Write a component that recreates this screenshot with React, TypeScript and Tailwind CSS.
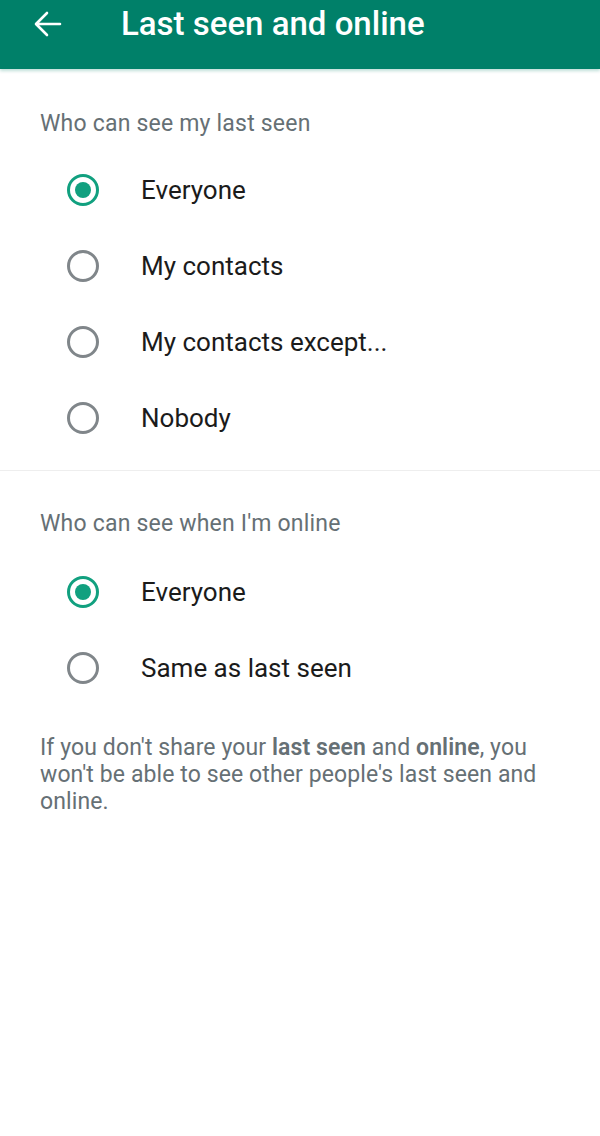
import type { FC } from 'react';

const FONT = { fontFamily: 'Roboto, "Noto Sans", sans-serif' };

const Radio: FC<{ checked?: boolean }> = ({ checked }) => (
  <span
    className={`flex h-[32px] w-[32px] shrink-0 items-center justify-center rounded-full border-[3px] ${
      checked ? 'border-[#11a07f]' : 'border-[#80868a]'
    }`}
  >
    {checked && <span className="h-[16px] w-[16px] rounded-full bg-[#11a07f]" />}
  </span>
);

const Option: FC<{ label: string; checked?: boolean }> = ({ label, checked }) => (
  <div className="flex h-[76px] items-center pl-[67px]">
    <Radio checked={checked} />
    <span className="ml-[42px] text-[26px] text-[#1b1b1b]">{label}</span>
  </div>
);

const SectionLabel: FC<{ children: string }> = ({ children }) => (
  <p className="px-[40px] text-[23px] leading-[28px] tracking-[0.2px] text-[#667075]">{children}</p>
);

export default function App() {
  return (
    <div className="flex min-h-[1136px] w-[600px] flex-col bg-white" style={FONT}>
      <header className="h-[69px] bg-[#008069] shadow-[0_2px_3px_rgba(0,128,105,0.25)]">
        <div className="flex h-[48px] items-center">
          <svg width="28" height="26" viewBox="0 0 28 26" className="ml-[34px]" fill="none">
            <path d="M26 13H3M13 2L2 13l11 11" stroke="white" strokeWidth="2.6" strokeLinecap="round" strokeLinejoin="round" />
          </svg>
          <h1 className="ml-[59px] text-[33px] font-medium leading-[40px] text-white">Last seen and online</h1>
        </div>
      </header>

      <section className="pt-[41px]">
        <SectionLabel>Who can see my last seen</SectionLabel>
        <div className="mt-[14px]">
          <Option label="Everyone" checked />
          <Option label="My contacts" />
          <Option label="My contacts except..." />
          <Option label="Nobody" />
        </div>
      </section>

      <div className="mt-[14px] h-px bg-[#eeeeee]" />

      <section className="pt-[39px]">
        <SectionLabel>Who can see when I'm online</SectionLabel>
        <div className="mt-[16px]">
          <Option label="Everyone" checked />
          <Option label="Same as last seen" />
        </div>
      </section>

      <p className="mt-[28px] pl-[40px] pr-[35px] text-[23px] leading-[27px] tracking-[0.1px] text-[#667075]">
        If you don't share your <b className="font-semibold">last seen</b> and{' '}
        <b className="font-semibold">online</b>, you won't be able to see other people's last seen and online.
      </p>
    </div>
  );
}
